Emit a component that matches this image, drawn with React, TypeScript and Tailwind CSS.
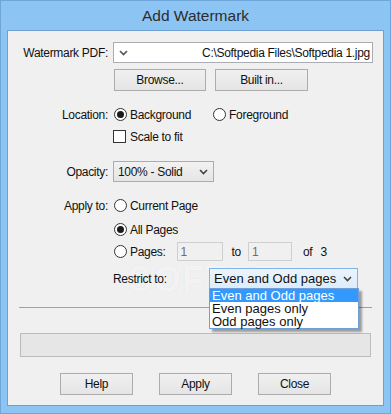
import React from "react";

const font = { fontFamily: '"Liberation Sans", Arial, sans-serif' };

function Radio({ checked = false }: { checked?: boolean }) {
  return (
    <span className="inline-grid h-[13px] w-[13px] shrink-0 place-items-center rounded-full border border-[#333] bg-white">
      {checked && <span className="h-[7px] w-[7px] rounded-full bg-[#1a1a1a]" />}
    </span>
  );
}

function Chevron({ className = "" }: { className?: string }) {
  return (
    <svg width="9" height="6" viewBox="0 0 9 6" className={className}>
      <path d="M1 1 L4.5 4.5 L8 1" fill="none" stroke="currentColor" strokeWidth="1.6" />
    </svg>
  );
}

function Btn({ label, className = "" }: { label: string; className?: string }) {
  return (
    <div
      className={`flex h-[22px] items-center justify-center border border-[#acacac] bg-gradient-to-b from-[#f0f0f0] to-[#e5e5e5] text-[#111] ${className}`}
    >
      {label}
    </div>
  );
}

export default function App() {
  return (
    <div
      className="flex h-[414px] w-[391px] flex-col border border-[#6ea6da] bg-[#8cc4f4] text-[12px] text-[#111] tracking-[-0.3px]"
      style={font}
    >
      <div className="flex h-[29px] shrink-0 items-center justify-center text-[15.5px] tracking-normal text-[#2d2d2d]">
        Add Watermark
      </div>

      <div className="relative mx-[6px] flex flex-1 flex-col border border-[#6f9fd0] bg-[#f0f0f0]">
        {/* faint site watermark, drawn behind the controls */}
        <div className="pointer-events-none absolute left-[120px] top-[222px] z-0 select-none text-[36px] font-bold tracking-[1px] text-white/70 [text-shadow:0_0_1px_rgba(0,0,0,0.10)]">
          SOFTPEDIA
        </div>

        <div className="relative z-10 flex flex-1 flex-col">
          {/* Watermark PDF */}
          <div className="mt-[11px] flex h-[21px] items-center">
            <div className="w-[100px] text-right">Watermark PDF:</div>
            <div className="ml-[5px] flex h-[21px] w-[260px] items-center border border-[#abadb3] bg-white pl-[5px] pr-[2px]">
              <Chevron className="text-[#555]" />
              <span className="ml-auto">C:\Softpedia Files\Softpedia 1.jpg</span>
            </div>
          </div>

          {/* Browse / Built in */}
          <div className="mt-[6px] flex pl-[106px]">
            <Btn label="Browse..." className="w-[92px]" />
            <Btn label="Built in..." className="ml-[9px] w-[93px]" />
          </div>

          {/* Location */}
          <div className="mt-[17px] flex h-[13px] items-center">
            <div className="w-[100px] text-right">Location:</div>
            <div className="ml-[6px] flex items-center gap-[3px]">
              <Radio checked />
              <span>Background</span>
            </div>
            <div className="ml-[22px] flex items-center gap-[3px]">
              <Radio />
              <span>Foreground</span>
            </div>
          </div>

          {/* Scale to fit */}
          <div className="mt-[9px] flex h-[13px] items-center gap-[4px] pl-[105px]">
            <span className="h-[13px] w-[13px] border border-[#333] bg-white" />
            <span>Scale to fit</span>
          </div>

          {/* Opacity */}
          <div className="mt-[18px] flex h-[21px] items-center">
            <div className="w-[100px] text-right">Opacity:</div>
            <div className="ml-[5px] flex h-[21px] w-[101px] items-center border border-[#acacac] bg-gradient-to-b from-[#f2f2f2] to-[#e5e5e5] pl-[4px] pr-[5px]">
              <span>100% - Solid</span>
              <Chevron className="ml-auto text-[#444]" />
            </div>
          </div>

          {/* Apply to */}
          <div className="mt-[17px] flex h-[13px] items-center">
            <div className="w-[100px] text-right">Apply to:</div>
            <div className="ml-[6px] flex items-center gap-[3px]">
              <Radio />
              <span>Current Page</span>
            </div>
          </div>
          <div className="mt-[11px] flex h-[13px] items-center gap-[3px] pl-[106px]">
            <Radio checked />
            <span>All Pages</span>
          </div>
          <div className="mt-[6px] flex h-[19px] items-center pl-[106px]">
            <Radio />
            <span className="ml-[3px]">Pages:</span>
            <div className="ml-[11px] flex h-[19px] w-[46px] items-center border border-[#cfcfcf] bg-[#f0f0f0] pl-[3px] text-[#6d6d6d]">
              1
            </div>
            <span className="ml-[9px]">to</span>
            <div className="ml-[7px] flex h-[19px] w-[44px] items-center border border-[#cfcfcf] bg-[#f0f0f0] pl-[3px] text-[#6d6d6d]">
              1
            </div>
            <span className="ml-[11px]">of</span>
            <span className="ml-[8px]">3</span>
          </div>

          {/* Restrict to */}
          <div className="relative mt-[7px] flex h-[21px] items-center pl-[105px]">
            <div className="w-[96px]">Restrict to:</div>
            <div className="flex h-[21px] w-[149px] items-center border border-[#7eb4ea] bg-gradient-to-b from-[#ecf4fc] to-[#dcecfc] pl-[4px] pr-[5px] text-[13px] tracking-normal">
              <span>Even and Odd pages</span>
              <Chevron className="ml-auto text-[#444]" />
            </div>
            {/* dropdown list */}
            <div className="absolute left-[201px] top-[20px] z-20 flex w-[150px] flex-col border border-[#6f9fd6] bg-white text-[13px] leading-[13px] tracking-normal shadow-[3px_3px_2px_rgba(0,0,0,0.35)]">
              <div className="bg-[#3399ff] px-[2px] text-white">Even and Odd pages</div>
              <div className="px-[2px]">Even pages only</div>
              <div className="px-[2px]">Odd pages only</div>
            </div>
          </div>

          {/* separator */}
          <div className="mx-[11px] mt-[18px] h-[2px] border-t border-[#a0a0a0] border-b-white" />

          {/* progress */}
          <div className="mx-[12px] mt-[24px] h-[24px] border border-[#bcbcbc] bg-[#e6e6e6]" />

          {/* bottom buttons */}
          <div className="mt-[16px] flex pl-[52px]">
            <Btn label="Help" className="w-[73px]" />
            <Btn label="Apply" className="ml-[26px] w-[73px]" />
            <Btn label="Close" className="ml-[26px] w-[73px]" />
          </div>
        </div>
      </div>
      <div className="h-[7px] shrink-0" />
    </div>
  );
}
